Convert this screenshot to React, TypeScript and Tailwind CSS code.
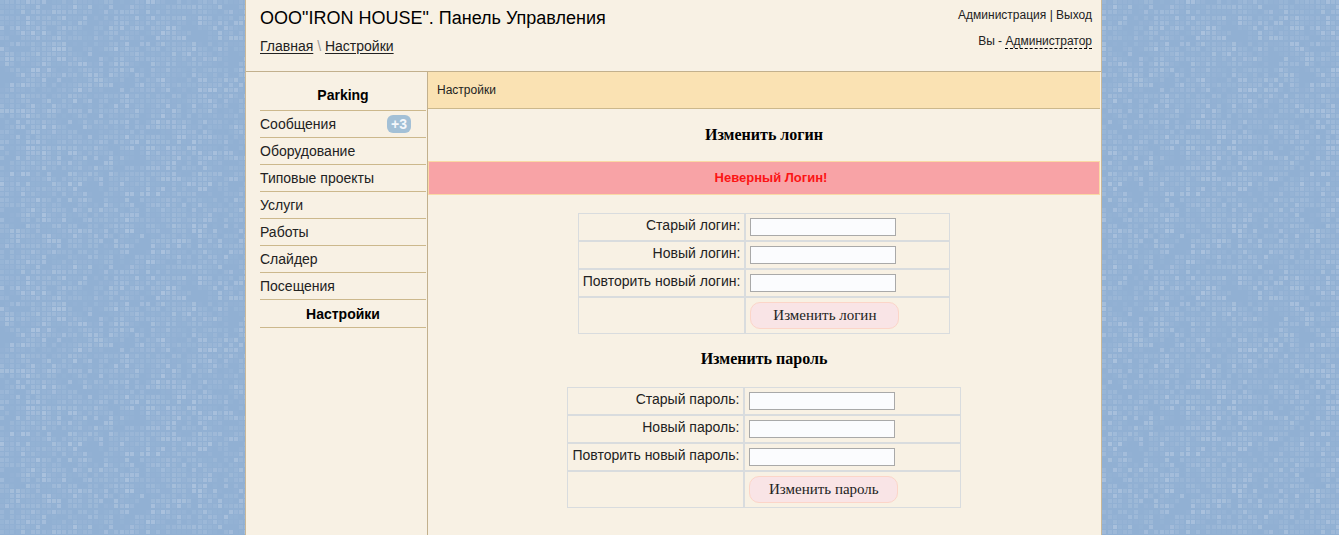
type MenuItem = { label: string; badge?: string };

const menu: MenuItem[] = [
  { label: "Сообщения", badge: "+3" },
  { label: "Оборудование" },
  { label: "Типовые проекты" },
  { label: "Услуги" },
  { label: "Работы" },
  { label: "Слайдер" },
  { label: "Посещения" },
];

const TILE_CELLS = 50;
const TILE_SIZE = 260;

type Cell = { x: number; y: number; opacity: number };

// Deterministic noise keeps the mosaic stable between renders.
function buildMosaic(): Cell[] {
  const cells: Cell[] = [];
  let seed = 20117;
  for (let row = 0; row < TILE_CELLS; row++) {
    for (let col = 0; col < TILE_CELLS; col++) {
      seed = (seed * 48271) % 2147483647;
      const n = seed / 2147483647;
      const u = (row / TILE_CELLS) * Math.PI * 2;
      const v = (col / TILE_CELLS) * Math.PI * 2;
      const drift = 0.04 * Math.sin(4 * v + 2 * Math.sin(3 * u)) * Math.cos(3 * u + Math.sin(2 * v));
      const base = n < 0.35 ? 0.02 : n < 0.88 ? 0.04 + (n - 0.35) * 0.2 : 0.21;
      cells.push({
        x: Math.round((col * TILE_SIZE) / TILE_CELLS),
        y: Math.round((row * TILE_SIZE) / TILE_CELLS),
        opacity: Math.max(0, Math.round((base + drift) * 100) / 100),
      });
    }
  }
  return cells;
}

const mosaic = buildMosaic();

function MosaicBackground() {
  return (
    <svg className="absolute inset-0 h-full w-full" aria-hidden="true">
      <defs>
        <pattern id="mosaic" width={TILE_SIZE} height={TILE_SIZE} patternUnits="userSpaceOnUse">
          <rect width={TILE_SIZE} height={TILE_SIZE} fill="#91b0d3" />
          {mosaic.map((c, i) => (
            <rect key={i} x={c.x} y={c.y} width="4" height="4" fill="#f4f4fa" opacity={c.opacity} />
          ))}
        </pattern>
      </defs>
      <rect width="100%" height="100%" fill="url(#mosaic)" />
    </svg>
  );
}

type ChangeFormProps = {
  id: string;
  title: string;
  fields: string[];
  type: "text" | "password";
};

function ChangeForm({ id, title, fields, type }: ChangeFormProps) {
  const cell = "border border-[#d9dcde] px-1 align-top";
  return (
    <form onSubmit={(e) => e.preventDefault()}>
      <table className="mx-auto border-separate border-spacing-0 text-sm leading-4">
        <tbody>
          {fields.map((field, i) => (
            <tr key={field} className="h-7">
              <td className={`${cell} w-[45%] pt-[3px] text-right whitespace-nowrap`}>
                <label htmlFor={`${id}-${i}`}>{field}:</label>
              </td>
              <td className={`${cell} pt-1`}>
                <input
                  id={`${id}-${i}`}
                  type={type}
                  className="block h-[18px] w-[146px] border border-[#a9a9a9] bg-[#fbfcfe] px-1"
                />
              </td>
            </tr>
          ))}
          <tr>
            <td className={cell}></td>
            <td className={`${cell} py-1`}>
              <button
                type="submit"
                className="block h-[27px] w-[149px] rounded-[10px] border border-[#fcd5c8] bg-[#f9e4e6] pb-px font-['Liberation_Serif',serif] text-[15px] leading-4"
              >
                {title}
              </button>
            </td>
          </tr>
        </tbody>
      </table>
    </form>
  );
}

function FormTitle({ children }: { children: string }) {
  return (
    <h2 className="text-center font-['Liberation_Serif',serif] text-base leading-5 font-bold text-black">
      {children}
    </h2>
  );
}

export default function App() {
  return (
    <div className="relative flex min-h-screen justify-center bg-[#91b0d3] pl-2 font-['Liberation_Sans',Arial,sans-serif] text-[#222]">
      <MosaicBackground />
      <div className="relative flex w-full max-w-[857px] flex-col border-x border-[#c9b899] bg-[#f8f1e4]">
        <header className="flex justify-between border-b border-[#c2b08d] pt-2 pr-[9px] pb-4 pl-[14px]">
          <div>
            <h1 className="text-lg leading-5 text-black">ООО"IRON HOUSE". Панель Управления</h1>
            <nav className="mt-[10px] pb-px text-sm leading-4">
              <a href="#" className="underline underline-offset-2">Главная</a>
              <span className="text-[#999]"> \ </span>
              <a href="#" className="underline underline-offset-2">Настройки</a>
            </nav>
          </div>
          <div className="text-right text-xs leading-[14px]">
            <div>
              <a href="#">Администрация</a> | <a href="#">Выход</a>
            </div>
            <div className="mt-3">
              Вы - <a href="#" className="border-b border-dashed border-black">Администратор</a>
            </div>
          </div>
        </header>

        <div className="flex grow">
          <aside className="w-[182px] shrink-0 border-r border-[#c2b08d] pr-px pl-[14px] text-sm leading-4">
            <h2 className="border-b border-[#ccb88c] pt-[15px] pb-[7px] text-center font-bold text-black">
              Parking
            </h2>
            <ul>
              {menu.map((item) => (
                <li key={item.label} className="border-b border-[#ccb88c]">
                  <a href="#" className="flex h-[26px] items-center justify-between pr-[15px]">
                    {item.label}
                    {item.badge && (
                      <span className="rounded-md bg-[#a3c0d6] px-1 py-px font-bold text-[#f5f8fb]">
                        {item.badge}
                      </span>
                    )}
                  </a>
                </li>
              ))}
              <li className="border-b border-[#ccb88c]">
                <a href="#" className="flex h-[27px] items-center justify-center font-bold text-black">
                  Настройки
                </a>
              </li>
            </ul>
          </aside>

          <main className="grow pr-px pb-6">
            <div className="border-b border-[#ccb88c] bg-[#fae2b3] px-[9px] py-[11px] text-xs leading-[14px]">
              Настройки
            </div>
            <div className="mt-4">
              <FormTitle>Изменить логин</FormTitle>
            </div>
            <p
              role="alert"
              className="mt-4 border border-[#fad9a5] bg-[#f8a3a6] py-2 pl-[14px] text-center text-[13px] leading-4 font-bold text-[#fc1414]"
            >
              Неверный Логин!
            </p>
            <div className="mt-[18px]">
              <ChangeForm
                id="login"
                type="text"
                title="Изменить логин"
                fields={["Старый логин", "Новый логин", "Повторить новый логин"]}
              />
            </div>
            <div className="mt-[15px] mb-[18px]">
              <FormTitle>Изменить пароль</FormTitle>
            </div>
            <ChangeForm
              id="password"
              type="password"
              title="Изменить пароль"
              fields={["Старый пароль", "Новый пароль", "Повторить новый пароль"]}
            />
          </main>
        </div>
      </div>
    </div>
  );
}
